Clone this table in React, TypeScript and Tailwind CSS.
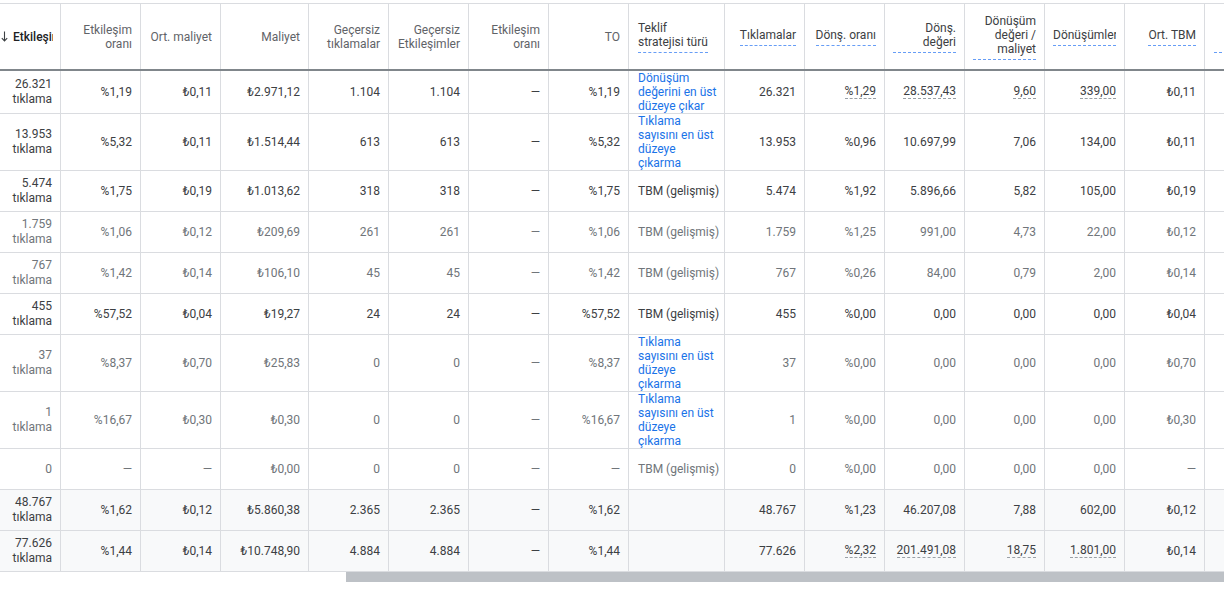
import type { ReactNode } from "react";

type Tone = "dark" | "light";

type Row = {
  clicks: string;
  single?: boolean;
  values: string[];
  strategy: { lines: string[]; link: boolean } | null;
  conv: string[];
  tbm: string;
  tone: Tone;
  dotted?: boolean;
  summary?: boolean;
};

const WIDTHS = [61, 80, 80, 88, 80, 80, 80, 80, 96, 80, 80, 80, 80, 80, 80, 100];

const MAX = ["Tıklama", "sayısını en üst", "düzeye", "çıkarma"];
const TBM = ["TBM (gelişmiş)"];

const rows: Row[] = [
  {
    clicks: "26.321",
    values: ["%1,19", "₺0,11", "₺2.971,12", "1.104", "1.104", "—", "%1,19"],
    strategy: { lines: ["Dönüşüm", "değerini en üst", "düzeye çıkar"], link: true },
    conv: ["26.321", "%1,29", "28.537,43", "9,60", "339,00"],
    tbm: "₺0,11",
    tone: "dark",
    dotted: true,
  },
  {
    clicks: "13.953",
    values: ["%5,32", "₺0,11", "₺1.514,44", "613", "613", "—", "%5,32"],
    strategy: { lines: MAX, link: true },
    conv: ["13.953", "%0,96", "10.697,99", "7,06", "134,00"],
    tbm: "₺0,11",
    tone: "dark",
  },
  {
    clicks: "5.474",
    values: ["%1,75", "₺0,19", "₺1.013,62", "318", "318", "—", "%1,75"],
    strategy: { lines: TBM, link: false },
    conv: ["5.474", "%1,92", "5.896,66", "5,82", "105,00"],
    tbm: "₺0,19",
    tone: "dark",
  },
  {
    clicks: "1.759",
    values: ["%1,06", "₺0,12", "₺209,69", "261", "261", "—", "%1,06"],
    strategy: { lines: TBM, link: false },
    conv: ["1.759", "%1,25", "991,00", "4,73", "22,00"],
    tbm: "₺0,12",
    tone: "light",
  },
  {
    clicks: "767",
    values: ["%1,42", "₺0,14", "₺106,10", "45", "45", "—", "%1,42"],
    strategy: { lines: TBM, link: false },
    conv: ["767", "%0,26", "84,00", "0,79", "2,00"],
    tbm: "₺0,14",
    tone: "light",
  },
  {
    clicks: "455",
    values: ["%57,52", "₺0,04", "₺19,27", "24", "24", "—", "%57,52"],
    strategy: { lines: TBM, link: false },
    conv: ["455", "%0,00", "0,00", "0,00", "0,00"],
    tbm: "₺0,04",
    tone: "dark",
  },
  {
    clicks: "37",
    values: ["%8,37", "₺0,70", "₺25,83", "0", "0", "—", "%8,37"],
    strategy: { lines: MAX, link: true },
    conv: ["37", "%0,00", "0,00", "0,00", "0,00"],
    tbm: "₺0,70",
    tone: "light",
  },
  {
    clicks: "1",
    values: ["%16,67", "₺0,30", "₺0,30", "0", "0", "—", "%16,67"],
    strategy: { lines: MAX, link: true },
    conv: ["1", "%0,00", "0,00", "0,00", "0,00"],
    tbm: "₺0,30",
    tone: "light",
  },
  {
    clicks: "0",
    single: true,
    values: ["—", "—", "₺0,00", "0", "0", "—", "—"],
    strategy: { lines: TBM, link: false },
    conv: ["0", "%0,00", "0,00", "0,00", "0,00"],
    tbm: "—",
    tone: "light",
  },
  {
    clicks: "48.767",
    values: ["%1,62", "₺0,12", "₺5.860,38", "2.365", "2.365", "—", "%1,62"],
    strategy: null,
    conv: ["48.767", "%1,23", "46.207,08", "7,88", "602,00"],
    tbm: "₺0,12",
    tone: "dark",
    summary: true,
  },
  {
    clicks: "77.626",
    values: ["%1,44", "₺0,14", "₺10.748,90", "4.884", "4.884", "—", "%1,44"],
    strategy: null,
    conv: ["77.626", "%2,32", "201.491,08", "18,75", "1.801,00"],
    tbm: "₺0,14",
    tone: "dark",
    dotted: true,
    summary: true,
  },
];

function Cell({ w, children, left }: { w: number; children?: ReactNode; left?: boolean }) {
  return (
    <div
      style={{ width: w }}
      className={`flex shrink-0 items-center border-r border-[#dadce0] ${
        left ? "justify-start pl-[9px] pr-1 text-left" : "justify-end pl-1 pr-2 text-right"
      }`}
    >
      {children}
    </div>
  );
}

function HeadCell({
  w,
  label,
  tip,
  full,
}: {
  w: number;
  label: ReactNode;
  tip?: boolean;
  full?: boolean;
}) {
  return (
    <div
      style={{ width: w }}
      className="flex shrink-0 items-center justify-end border-r border-[#dadce0] px-2 text-right"
    >
      {tip ? (
        <span
          className={`inline-block border-b border-dashed border-[#669df6] pb-[3px] text-[#3c4043] ${
            full ? "w-full" : ""
          }`}
        >
          {label}
        </span>
      ) : (
        <span className="text-[#5f6368]">{label}</span>
      )}
    </div>
  );
}

function Dotted({ children, on }: { children: ReactNode; on?: boolean }) {
  if (!on) return <span>{children}</span>;
  return <span className="inline-block border-b border-dashed border-[#9aa0a6] leading-[13px]">{children}</span>;
}

export default function App() {
  return (
    <div className="h-[591px] w-[1224px] overflow-hidden bg-white pt-[3px] font-['Roboto',sans-serif] text-[12px] leading-[14px]">
      <div className="overflow-hidden">
        <div className="w-[1304px]">
          {/* header */}
          <div className="flex h-[68px] border-t border-b-2 border-t-[#dadce0] border-b-[#80868b]">
            <div style={{ width: WIDTHS[0] }} className="flex shrink-0 items-center border-r border-[#dadce0] pl-px">
              <div className="flex w-[52px] items-center gap-[5px] overflow-hidden whitespace-nowrap font-medium text-[#202124]">
                <svg width="7" height="11" viewBox="0 0 7 11" className="shrink-0">
                  <path d="M3.5 0.5V10M0.8 7.2L3.5 10L6.2 7.2" fill="none" stroke="#3c4043" strokeWidth="1.1" />
                </svg>
                <span>Etkileşimler</span>
              </div>
            </div>
            <HeadCell w={WIDTHS[1]} label="Etkileşim oranı" />
            <HeadCell w={WIDTHS[2]} label="Ort. maliyet" />
            <HeadCell w={WIDTHS[3]} label="Maliyet" />
            <HeadCell w={WIDTHS[4]} label="Geçersiz tıklamalar" />
            <HeadCell w={WIDTHS[5]} label="Geçersiz Etkileşimler" />
            <HeadCell w={WIDTHS[6]} label="Etkileşim oranı" />
            <HeadCell w={WIDTHS[7]} label="TO" />
            <div
              style={{ width: WIDTHS[8] }}
              className="flex shrink-0 items-center border-r border-[#dadce0] pl-[9px] pr-1 text-left"
            >
              <span className="inline-block border-b border-dashed border-[#669df6] pb-[3px] text-[#3c4043]">
                Teklif
                <br />
                <span className="whitespace-nowrap">stratejisi türü</span>
              </span>
            </div>
            <HeadCell w={WIDTHS[9]} label="Tıklamalar" tip />
            <HeadCell w={WIDTHS[10]} label="Dönş. oranı" tip />
            <HeadCell w={WIDTHS[11]} label="Dönş. değeri" tip full />
            <HeadCell w={WIDTHS[12]} label="Dönüşüm değeri / maliyet" tip full />
            <div style={{ width: WIDTHS[13] }} className="flex shrink-0 items-center border-r border-[#dadce0] px-2">
              <span className="inline-block w-full overflow-hidden whitespace-nowrap border-b border-dashed border-[#669df6] pb-[3px] text-[#3c4043]">
                Dönüşümler
              </span>
            </div>
            <HeadCell w={WIDTHS[14]} label="Ort. TBM" tip />
            <div style={{ width: WIDTHS[15] }} className="flex shrink-0 items-center pl-[9px] pr-2">
              <span className="inline-block w-full border-b border-dashed border-[#669df6] pb-[3px] text-right text-[#3c4043]">
                Tüm dönş. değeri
              </span>
            </div>
          </div>

          {/* body */}
          {rows.map((r, i) => {
            const color = r.tone === "dark" ? "text-[#3c4043]" : "text-[#70757a]";
            return (
              <div
                key={i}
                className={`flex min-h-[41px] border-b border-[#dadce0] ${color} ${r.summary ? "bg-[#f8f9fa]" : "bg-white"}`}
              >
                <Cell w={WIDTHS[0]}>
                  {r.single ? (
                    <span>{r.clicks}</span>
                  ) : (
                    <span className="leading-[15px]">
                      {r.clicks}
                      <br />
                      tıklama
                    </span>
                  )}
                </Cell>
                {r.values.map((v, j) => (
                  <Cell key={j} w={WIDTHS[j + 1]}>
                    {v}
                  </Cell>
                ))}
                <Cell w={WIDTHS[8]} left>
                  {r.strategy ? (
                    <span className={`whitespace-nowrap ${r.strategy.link ? "text-[#1a73e8]" : ""}`}>
                      {r.strategy.lines.map((line, k) => (
                        <span key={k} className="block">
                          {line}
                        </span>
                      ))}
                    </span>
                  ) : null}
                </Cell>
                {r.conv.map((v, j) => (
                  <Cell key={j} w={WIDTHS[j + 9]}>
                    <Dotted on={r.dotted && j > 0}>{v}</Dotted>
                  </Cell>
                ))}
                <Cell w={WIDTHS[14]}>{r.tbm}</Cell>
                <div style={{ width: WIDTHS[15] }} className="shrink-0" />
              </div>
            );
          })}
        </div>
      </div>

      {/* horizontal scrollbar */}
      <div className="h-[10px]">
        <div className="ml-[346px] h-full bg-[#bdc1c6]" />
      </div>
    </div>
  );
}
